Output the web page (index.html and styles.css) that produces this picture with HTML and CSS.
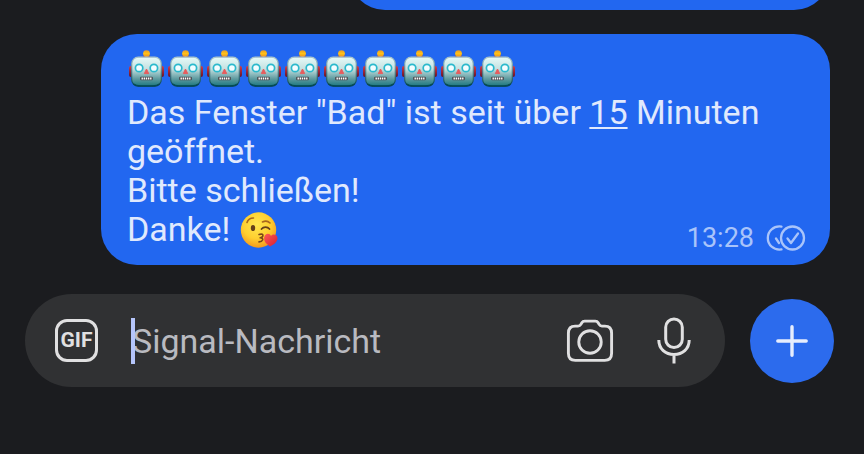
FILE: index.html
```html
<!DOCTYPE html>
<html lang="de">
<head>
    <meta charset="UTF-8">
    <meta name="viewport" content="width=device-width, initial-scale=1.0">
    <title>Signal</title>
    <link rel="stylesheet" href="styles.css">
</head>
<body>
    <!-- EMOJI AND GRADIENTS -->
    <svg class="defs" aria-hidden="true">
        <defs>
            <linearGradient id="face" x1="0" y1="0" x2="0" y2="1">
                <stop offset="0" stop-color="#e6faf8"/>
                <stop offset="0.4" stop-color="#c5e1e1"/>
                <stop offset="0.75" stop-color="#5d999e"/>
                <stop offset="1" stop-color="#1b7780"/>
            </linearGradient>
            <linearGradient id="rim" x1="0" y1="0" x2="0" y2="1">
                <stop offset="0" stop-color="#a9c4cc"/>
                <stop offset="0.5" stop-color="#4f7f8a"/>
                <stop offset="1" stop-color="#04444f"/>
            </linearGradient>
            <linearGradient id="bulb" x1="0" y1="0" x2="0" y2="1">
                <stop offset="0" stop-color="#e99b25"/>
                <stop offset="0.5" stop-color="#ffc21a"/>
                <stop offset="1" stop-color="#ec8c1c"/>
            </linearGradient>
            <linearGradient id="ear" x1="0" y1="0" x2="0" y2="1">
                <stop offset="0" stop-color="#d33c49"/>
                <stop offset="1" stop-color="#641229"/>
            </linearGradient>
            <radialGradient id="skin" cx="0.45" cy="0.35" r="0.65">
                <stop offset="0" stop-color="#ffe64f"/>
                <stop offset="0.6" stop-color="#ffcf30"/>
                <stop offset="1" stop-color="#f39a1d"/>
            </radialGradient>
            <linearGradient id="heart" x1="0" y1="0" x2="1" y2="1">
                <stop offset="0" stop-color="#ff5a55"/>
                <stop offset="1" stop-color="#d61f32"/>
            </linearGradient>
            <symbol id="robot" viewBox="0 0 39 39">
                <rect x="2" y="16" width="5" height="11" rx="2" fill="url(#ear)"/>
                <rect x="32" y="16" width="5" height="11" rx="2" fill="url(#ear)"/>
                <path d="M15.300 9c0-3 1-4 4.200-4s4.200 1 4.200 4z" fill="#7d4a68"/>
                <circle cx="19.500" cy="3.600" r="3.400" fill="url(#bulb)"/>
                <rect x="4.700" y="7.200" width="29.600" height="29" rx="6.500" fill="url(#face)" stroke="url(#rim)" stroke-width="1.2"/>
                <path d="M6.500 34c2 1.600 4 1.800 7 1.800h12c3 0 5-.2 7-1.800" fill="none" stroke="#064b55" stroke-width="1.300"/>
                <circle cx="12.100" cy="18" r="3.700" fill="#f2fdff" stroke="#2bb9cc" stroke-width="1.700"/>
                <circle cx="26.900" cy="18" r="3.700" fill="#f2fdff" stroke="#2bb9cc" stroke-width="1.700"/>
                <path d="M19.500 19l2.200 4.600h-4.400z" fill="#e75c5d" stroke="#e75c5d" stroke-linejoin="round"/>
                <rect x="13.100" y="26.700" width="12.800" height="3.600" rx="1" fill="#4b4c50"/>
                <path d="M14.500 28.500h10" stroke="#fff" stroke-width="2" stroke-dasharray="1.400 0.750"/>
            </symbol>
        </defs>
    </svg>

    <!-- MESSAGES -->
    <main class="messages">
        <div class="bubble bubble-previous"></div>
        <div class="bubble">
            <div class="robots" role="img" aria-label="🤖🤖🤖🤖🤖🤖🤖🤖🤖🤖">
                <svg class="emoji"><use href="#robot"/></svg>
                <svg class="emoji"><use href="#robot"/></svg>
                <svg class="emoji"><use href="#robot"/></svg>
                <svg class="emoji"><use href="#robot"/></svg>
                <svg class="emoji"><use href="#robot"/></svg>
                <svg class="emoji"><use href="#robot"/></svg>
                <svg class="emoji"><use href="#robot"/></svg>
                <svg class="emoji"><use href="#robot"/></svg>
                <svg class="emoji"><use href="#robot"/></svg>
                <svg class="emoji"><use href="#robot"/></svg>
            </div>
            <p class="text">Das Fenster "Bad" ist seit über <a class="number" href="#">15</a> Minuten geöffnet.<br>
            Bitte schließen!<br>
            Danke! <svg class="emoji kiss" viewBox="0 0 39 39" role="img" aria-label="😘">
                <circle cx="19.500" cy="20" r="17.700" fill="url(#skin)"/>
                <path d="M8 12.500c1-3 3.500-4.500 6.500-4.500M23.500 12c3-1.500 5.500-1 7.500 1" fill="none" stroke="#a7661c" stroke-width="1.600" stroke-linecap="round"/>
                <ellipse cx="14" cy="18" rx="2.200" ry="3.100" fill="#66401a"/>
                <path d="M22.500 19c2-2.500 6-2.500 8 0" fill="none" stroke="#66401a" stroke-width="1.800" stroke-linecap="round"/>
                <path d="M20 24.500c3-1 4.500 0 3.800 1.600-.4 1-1.600 1.500-2.600 1.700 1.800 0 3 .8 2.400 2.200-.6 1.400-2 1.900-3.600 1.900" fill="none" stroke="#7a4718" stroke-width="1.600" stroke-linecap="round" stroke-linejoin="round"/>
                <path d="M31 36.500c-4.400-2.800-6.400-5.600-5.800-9.200.6-4.200 5.400-4.800 6.800-1.400 2.600-3 7.200-.6 6.400 3.400-.8 3.400-3.700 5.500-7.400 7.200z" fill="url(#heart)"/>
            </svg></p>
            <div class="meta">
                <time datetime="13:28">13:28</time>
                <svg class="receipt" viewBox="0 0 40 28" role="img" aria-label="Gelesen">
                    <circle cx="26.500" cy="14" r="11.500"/>
                    <path d="M15.500 2.600C7.500 1.500 1.800 7 1.800 14s5.700 12.500 13.700 11.400M10 14.500l3 4.500M21.500 14.500l3.500 4.500 7-9.500"/>
                </svg>
            </div>
        </div>
    </main>

    <!-- COMPOSER -->
    <form class="composer">
        <div class="field">
            <button type="button" class="gif" aria-label="GIF">GIF</button>
            <div class="entry">
                <input type="text" class="message-input" aria-label="Signal-Nachricht" placeholder="Signal-Nachricht">
                <span class="caret"></span>
            </div>
            <button type="button" class="icon-button" aria-label="Kamera">
                <svg class="icon" viewBox="-1 0 50 50">
                    <path d="M8.500 9.500h3c1.500 0 2.300-.5 3-1.800l1-1.700c.7-1.200 1.500-1.700 3-1.700h11c1.500 0 2.300.5 3 1.700l1 1.700c.7 1.300 1.500 1.800 3 1.800h3c4.500 0 7 2.800 7 7.300v21c0 4.600-2.600 7.400-7.200 7.400H8.700c-4.600 0-7.200-2.800-7.200-7.400v-21c0-4.500 2.500-7.300 7-7.300z"/>
                    <circle cx="24" cy="26" r="11.700"/>
                </svg>
            </button>
            <button type="button" class="icon-button" aria-label="Sprachnachricht">
                <svg class="icon" viewBox="0 0 48 48">
                    <rect x="15.700" y="2" width="16.600" height="28.500" rx="8.300"/>
                    <path d="M8.800 23C8.800 32 15.500 37.500 24 37.500S39.200 32 39.200 23M24 37.500v9"/>
                </svg>
            </button>
        </div>
        <button type="button" class="add-button" aria-label="Anhang hinzufügen">
            <svg class="plus" viewBox="0 0 32 32">
                <path d="M16 1.800v28.400M1.800 16h28.400"/>
            </svg>
        </button>
    </form>
</body>
</html>
```

FILE: styles.css
```css
* {
    box-sizing: border-box;
}
body {
    font-family: Roboto, "Liberation Sans", sans-serif;
    background-color: #1b1c1f;
    margin: 0;
    height: 100vh;
    display: flex;
    flex-direction: column;
}
.defs {
    position: absolute;
    width: 0;
    height: 0;
}
.messages {
    flex: 1;
    min-height: 0;
    overflow: hidden;
    display: flex;
    flex-direction: column;
    justify-content: flex-end;
    align-items: flex-end;
    gap: 24px;
    padding: 0 34px 29px 101px;
}
.bubble {
    position: relative;
    flex-shrink: 0;
    width: 100%;
    padding: 16px 26px;
    border-radius: 36px;
    background-color: #2267f0;
    color: #e0e9fd;
    font-size: 34px;
    line-height: 39px;
}
.bubble-previous {
    width: 66%;
    height: 92px;
}
.robots {
    display: flex;
    height: 43px;
}
.emoji {
    width: 39px;
    height: 39px;
}
.text {
    margin: 0;
}
.number {
    color: inherit;
    text-decoration: underline;
    text-decoration-thickness: 2px;
    text-underline-offset: 3px;
    text-decoration-skip-ink: none;
}
.kiss {
    vertical-align: top;
}
.meta {
    position: absolute;
    right: 24px;
    bottom: 12px;
    display: flex;
    align-items: center;
    gap: 12px;
    color: #a9c4fa;
    font-size: 27px;
    line-height: 30px;
}
.receipt {
    width: 40px;
    height: 28px;
    fill: none;
    stroke: #a9c4fa;
    stroke-width: 2.3;
    stroke-linecap: round;
    stroke-linejoin: round;
}
.composer {
    display: flex;
    align-items: center;
    gap: 25px;
    padding: 0 30px 67px 25px;
}
.field {
    flex: 1;
    min-width: 0;
    display: flex;
    align-items: center;
    gap: 34px;
    padding: 22px 26px 22px 30px;
    border-radius: 47px;
    background-color: #303133;
}
button {
    border: none;
    padding: 0;
    background: none;
    cursor: pointer;
}
.icon-button {
    display: flex;
    justify-content: center;
    align-items: center;
    width: 50px;
    height: 49px;
}
.gif {
    width: 43px;
    height: 43px;
    border: 3px solid #e0e0e1;
    border-radius: 12px;
    color: #e0e0e1;
    font-family: Roboto, "Liberation Sans", sans-serif;
    font-size: 21px;
    font-weight: bold;
    line-height: 37px;
    text-align: center;
}
.icon {
    width: 48px;
    height: 48px;
    fill: none;
    stroke: #e0e0e1;
    stroke-width: 3;
}
.entry {
    position: relative;
    flex: 1;
    min-width: 0;
}
.message-input {
    display: block;
    width: 100%;
    height: 46px;
    padding: 0;
    border: none;
    outline: none;
    background: none;
    color: #e0e0e1;
    font-family: inherit;
    font-size: 34px;
}
.message-input::placeholder {
    color: #b9bac0;
    opacity: 1;
}
.caret {
    position: absolute;
    top: 0;
    left: -1px;
    width: 4px;
    height: 46px;
    background-color: #b5c5fb;
}
.add-button {
    display: flex;
    justify-content: center;
    align-items: center;
    width: 84px;
    height: 84px;
    border-radius: 50%;
    background-color: #2c6bed;
}
.plus {
    width: 32px;
    height: 32px;
    stroke: #e6edfd;
    stroke-width: 3.4;
    stroke-linecap: round;
}
```
